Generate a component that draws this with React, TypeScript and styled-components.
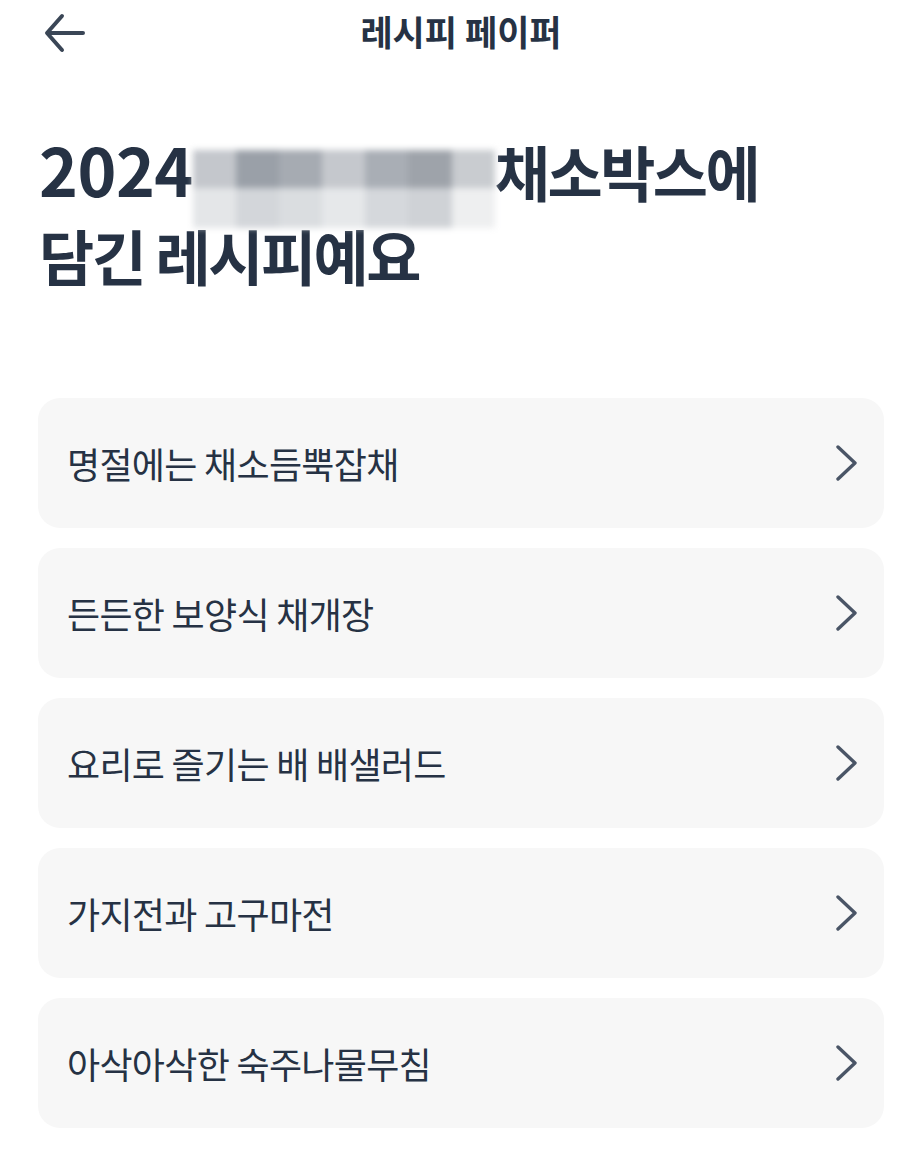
import React from "react";
import styled, { createGlobalStyle } from "styled-components";

const Global = createGlobalStyle`
  html, body { margin: 0; padding: 0; background: #ffffff; }
  body { font-family: "Noto Sans CJK KR", "Noto Sans", sans-serif; color: #263244; }
`;

const Page = styled.div`
  width: 922px;
  min-height: 1154px;
  background: #ffffff;
  display: flex;
  flex-direction: column;
`;

const TopBar = styled.header`
  height: 66px;
  display: grid;
  grid-template-columns: 120px 1fr 120px;
  align-items: center;
`;

const BackButton = styled.button`
  border: 0;
  background: none;
  padding: 0 0 0 42px;
  height: 66px;
  display: flex;
  align-items: center;
  cursor: pointer;
`;

const TopTitle = styled.h1`
  margin: 0;
  text-align: center;
  font-size: 35px;
  font-weight: 700;
  letter-spacing: 0;
  color: #263244;
  line-height: 62px;
  padding-bottom: 4px;
`;

const Heading = styled.h2`
  margin: 60px 0 0 39px;
  font-size: 60px;
  font-weight: 700;
  letter-spacing: -2.5px;
  line-height: 84px;
  color: #263244;
`;

const Year = styled.span`
  font-size: 66px;
  letter-spacing: -0.5px;
`;

const Masked = styled.span`
  display: inline-grid;
  grid-template-columns: repeat(7, 1fr);
  grid-template-rows: 38px 40px;
  vertical-align: top;
  width: 302px;
  height: 78px;
  margin: 24px 0 -40px 0;
  filter: blur(3px);
`;

const Tile = styled.span<{ $shade: string }>`
  background: ${(p) => p.$shade};
`;

const List = styled.ul`
  list-style: none;
  margin: 101px 38px 0 38px;
  padding: 0;
  display: flex;
  flex-direction: column;
  gap: 20px;
`;

const Card = styled.li`
  height: 130px;
  background: #f7f7f7;
  border-radius: 22px;
  display: flex;
  align-items: center;
  justify-content: space-between;
  padding: 0 24px 0 29px;
`;

const CardLabel = styled.span`
  font-size: 36px;
  font-weight: 400;
  letter-spacing: -0.7px;
  color: #263244;
`;

const Chevron = () => (
  <svg width="26" height="36" viewBox="0 0 26 36" fill="none">
    <path d="M4 2 L21 18 L4 34" stroke="#4a5566" strokeWidth="3.4" strokeLinecap="round" strokeLinejoin="round" />
  </svg>
);

const BackArrow = () => (
  <svg width="44" height="40" viewBox="0 0 44 40" fill="none">
    <path d="M41 20 H6 M20 3 L5 20 L20 37" stroke="#3a4656" strokeWidth="4" strokeLinecap="round" strokeLinejoin="round" />
  </svg>
);

const recipes = [
  "명절에는 채소듬뿍잡채",
  "든든한 보양식 채개장",
  "요리로 즐기는 배 배샐러드",
  "가지전과 고구마전",
  "아삭아삭한 숙주나물무침",
];

const shades = [
  "#c4c7cc", "#9aa0a8", "#a6abb2", "#c5c8cd", "#a9aeb5", "#9ea3aa", "#c9ccd0",
  "#e4e6e8", "#d3d6da", "#dadde0", "#e6e8ea", "#d5d8dc", "#cfd2d6", "#eeeff0",
];

export default function App() {
  return (
    <Page>
      <Global />
      <TopBar>
        <BackButton aria-label="뒤로">
          <BackArrow />
        </BackButton>
        <TopTitle>레시피 페이퍼</TopTitle>
        <span />
      </TopBar>
      <Heading>
        <Year>2024</Year>
        <Masked aria-hidden>
          {shades.map((s, i) => (
            <Tile key={i} $shade={s} />
          ))}
        </Masked>
        채소박스에
        <br />
        담긴 레시피예요
      </Heading>
      <List>
        {recipes.map((r) => (
          <Card key={r}>
            <CardLabel>{r}</CardLabel>
            <Chevron />
          </Card>
        ))}
      </List>
    </Page>
  );
}
